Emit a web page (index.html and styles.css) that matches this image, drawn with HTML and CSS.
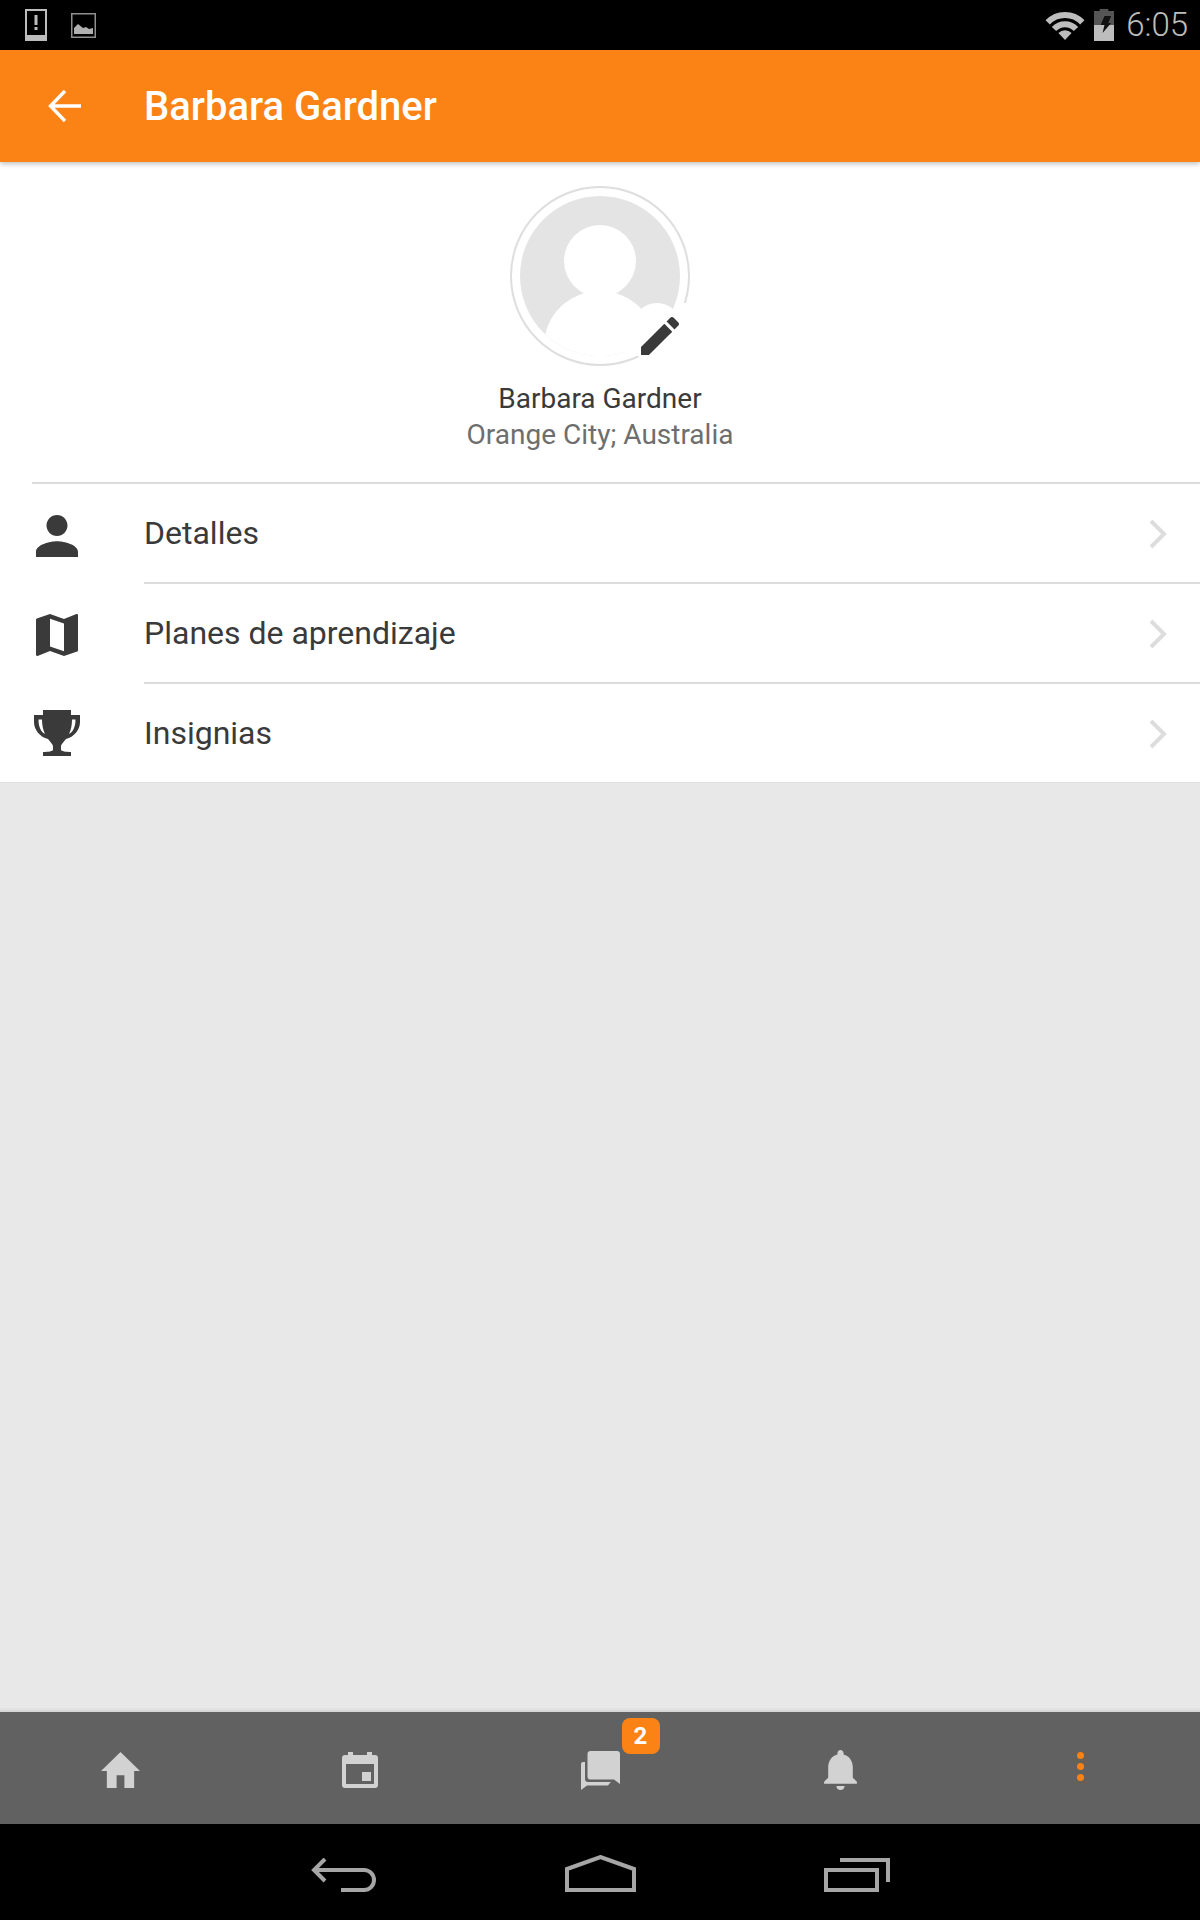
FILE: index.html
```html
<!DOCTYPE html>
<html lang="es">
<head>
  <meta charset="UTF-8" />
  <meta name="viewport" content="width=device-width, initial-scale=1.0" />
  <title>Barbara Gardner</title>
  <link rel="stylesheet" href="styles.css">
</head>
<body>
  <div class="pantalla">
    <div class="status-bar">
      <div class="status-izq">
        <svg width="22" height="32" viewBox="0 0 22 32">
          <path fill="#bdbdbd" fill-rule="evenodd" d="M0 0h22v32H0zM2 2v24h18V2z"/>
          <rect x="9.5" y="6" width="3" height="10" fill="#bdbdbd"/>
          <rect x="9.5" y="18" width="3" height="3" fill="#bdbdbd"/>
        </svg>
        <svg width="25" height="25" viewBox="0 0 25 25">
          <rect x="0.75" y="0.75" width="23.5" height="23.5" fill="none" stroke="#8f8f8f" stroke-width="1.5"/>
          <path fill="#b0b0b0" d="M3 21v-6l4-4 5 4 3-1 3 2 4-1v6z"/>
        </svg>
      </div>
      <div class="status-der">
        <svg class="wifi" width="40" height="29" viewBox="0 0 40 29">
          <path d="M2.700 11.300a24 24 0 0 1 34.600 0M9 18a15 15 0 0 1 22 0" fill="none" stroke="#bdbdbd" stroke-width="6"/>
          <path d="M13.400 22a9.500 9.500 0 0 1 13.200 0L20 29z" fill="#bdbdbd"/>
        </svg>
        <svg class="bateria" width="20" height="32" viewBox="0 0 21 32" preserveAspectRatio="none">
          <path fill="#555" d="M6 0h9v2h6v14H0V2h6z"/>
          <rect y="16" width="21" height="16" fill="#bdbdbd"/>
          <path fill="#111" d="M11 7h7l-3 7h3L9 24l2-8H7z"/>
        </svg>
        <span class="hora">6:05</span>
      </div>
    </div>

    <header class="toolbar">
      <svg class="btn-volver" width="34" height="34" viewBox="0 0 34 34">
        <path d="M33 17H4M17 2 2.500 17 17 32" fill="none" stroke="#fff" stroke-width="3.400"/>
      </svg>
      <h1>Barbara Gardner</h1>
    </header>

    <section class="perfil">
      <div class="avatar">
        <svg width="180" height="180" viewBox="0 0 180 180">
          <circle cx="90" cy="90" r="89" fill="none" stroke="#dedede" stroke-width="2"/>
          <circle cx="90" cy="90" r="80" fill="#e4e4e4"/>
          <clipPath id="recorte"><circle cx="90" cy="90" r="80"/></clipPath>
          <g clip-path="url(#recorte)" fill="#fff">
            <circle cx="90" cy="75" r="36"/>
            <ellipse cx="90" cy="160" rx="56" ry="55"/>
          </g>
          <circle cx="147" cy="141" r="24" fill="#fff"/>
          <circle cx="126" cy="152" r="18" fill="#fff"/>
          <path d="M174.800 116.800A89 89 0 0 1 128.500 170" fill="none" stroke="#fff" stroke-width="4"/>
        </svg>
        <svg class="lapiz" width="38" height="38" viewBox="3 3 18 18">
          <path fill="#3a3a3a" d="M3 17.250V21h3.750L17.810 9.940l-3.750-3.750L3 17.250zM20.710 7.040c.39-.39.39-1.020 0-1.410l-2.340-2.340c-.39-.39-1.020-.39-1.410 0l-1.830 1.830 3.750 3.750 1.830-1.830z"/>
        </svg>
      </div>
      <div class="perfil-nombre">Barbara Gardner</div>
      <div class="perfil-lugar">Orange City; Australia</div>
    </section>

    <ul class="menu">
      <li class="menu-item">
        <span class="menu-icono">
          <svg width="42" height="42" viewBox="4 4 16 16"><path d="M12 12c2.210 0 4-1.790 4-4s-1.790-4-4-4-4 1.790-4 4 1.790 4 4 4zm0 2c-2.670 0-8 1.340-8 4v2h16v-2c0-2.660-5.330-4-8-4z"/></svg>
        </span>
        <span class="menu-fila">
          <span>Detalles</span>
          <svg class="chevron" width="18" height="30" viewBox="0 0 18 30"><path d="M2 2l13 13L2 28"/></svg>
        </span>
      </li>
      <li class="menu-item">
        <span class="menu-icono">
          <svg width="42" height="42" viewBox="3 3 18 18"><path d="M20.500 3l-.16.030L15 5.100 9 3 3.360 4.900c-.21.070-.36.250-.36.480V20.500c0 .280.220.500.500.500l.16-.030L9 18.900l6 2.100 5.640-1.900c.210-.070.360-.250.360-.480V3.500c0-.280-.220-.500-.500-.500zM15 19l-6-2.110V5l6 2.110V19z"/></svg>
        </span>
        <span class="menu-fila">
          <span>Planes de aprendizaje</span>
          <svg class="chevron" width="18" height="30" viewBox="0 0 18 30"><path d="M2 2l13 13L2 28"/></svg>
        </span>
      </li>
      <li class="menu-item">
        <span class="menu-icono">
          <svg class="trofeo" width="46" height="46" viewBox="0 0 46 46"><path fill-rule="evenodd" d="M9 0H37V5H46V12C46 20 40 27 32 29C29 33 27 34 27 37V40C27 41 32 42 37 42V46H9V42C14 42 19 41 19 40V37C19 34 17 33 14 29C6 27 0 20 0 12V5H9ZM4.500 9.500H8C8 15 9 20 11 24C7 22 4.500 17 4.500 9.500ZM41.500 9.500H38C38 15 37 20 35 24C39 22 41.500 17 41.500 9.500Z"/></svg>
        </span>
        <span class="menu-fila">
          <span>Insignias</span>
          <svg class="chevron" width="18" height="30" viewBox="0 0 18 30"><path d="M2 2l13 13L2 28"/></svg>
        </span>
      </li>
    </ul>

    <main class="contenido"></main>

    <nav class="tabs">
      <a class="tab">
        <svg width="39" height="36" viewBox="2 3 20 17" preserveAspectRatio="none"><path d="M10 20v-6h4v6h5v-8h3L12 3 2 12h3v8z"/></svg>
      </a>
      <a class="tab">
        <svg width="36" height="36" viewBox="0 0 36 36"><path fill-rule="evenodd" d="M6 0h5v3h14V0h5v3h3a3 3 0 0 1 3 3v27a3 3 0 0 1-3 3H3a3 3 0 0 1-3-3V6a3 3 0 0 1 3-3h3zM4 12v20h28V12z"/><rect x="20" y="20" width="9" height="9"/></svg>
      </a>
      <a class="tab">
        <span class="tab-chat">
          <svg width="39" height="39" viewBox="0 0 39 39">
            <path d="M9.500 0H36a3 3 0 0 1 3 3V33l-6-4.500H9.500a3 3 0 0 1-3-3V3a3 3 0 0 1 3-3z"/>
            <path d="M0 13a2 2 0 0 1 2-2H4V28a3 3 0 0 0 3 3H30L28 33a2 2 0 0 1-2 1.500H6L0 39z"/>
          </svg>
          <span class="badge">2</span>
        </span>
      </a>
      <a class="tab">
        <svg width="33" height="40" viewBox="4 2.500 16 19.500"><path d="M12 22c1.100 0 2-.9 2-2h-4c0 1.100.89 2 2 2zm6-6v-5c0-3.070-1.640-5.640-4.500-6.320V4c0-.83-.67-1.500-1.500-1.500s-1.500.67-1.500 1.500v.68C7.630 5.360 6 7.920 6 11v5l-2 2v1h16v-1l-2-2z"/></svg>
      </a>
      <a class="tab">
        <span class="puntos"><i></i><i></i><i></i></span>
      </a>
    </nav>

    <div class="nav-sistema">
      <svg width="66" height="34" viewBox="0 0 66 34">
        <path d="M14 1 3 12l11 11M3 12h50a10 10 0 0 1 0 20H30" fill="none" stroke="#a6a6a6" stroke-width="4"/>
      </svg>
      <svg width="71" height="37" viewBox="0 0 71 37">
        <path d="M2 35V14L35.500 2 69 14v21z" fill="none" stroke="#a6a6a6" stroke-width="4"/>
      </svg>
      <svg width="66" height="34" viewBox="0 0 66 34">
        <rect x="2" y="12" width="51" height="20" fill="none" stroke="#a6a6a6" stroke-width="4"/>
        <path d="M16 2h48v22" fill="none" stroke="#a6a6a6" stroke-width="4"/>
      </svg>
    </div>
  </div>
</body>
</html>
```

FILE: styles.css
```css
* {
  box-sizing: border-box;
}
body {
  margin: 0;
  font-family: Roboto, "Liberation Sans", sans-serif;
  background: #e8e8e8;
}
.pantalla {
  width: 1200px;
  height: 1920px;
  display: flex;
  flex-direction: column;
}

.status-bar {
  height: 50px;
  background: #000;
  display: flex;
  justify-content: space-between;
  align-items: center;
  flex: none;
}
.status-izq {
  display: flex;
  align-items: center;
  gap: 24px;
  padding-left: 25px;
}
.status-der {
  display: flex;
  align-items: center;
  padding-right: 12px;
}
.wifi {
  margin-right: 9px;
}
.bateria {
  margin-right: 12px;
}
.hora {
  color: #bdbdbd;
  font-size: 33px;
  font-weight: 300;
  line-height: 50px;
}

.toolbar {
  height: 112px;
  flex: none;
  background: #fb8214;
  display: flex;
  align-items: center;
  padding-left: 48px;
  box-shadow: 0 2px 5px rgba(0, 0, 0, 0.25);
  position: relative;
}
.toolbar h1 {
  margin: 0 0 0 62px;
  color: #fff;
  font-size: 40px;
  font-weight: 500;
}

.perfil {
  background: #fff;
  height: 320px;
  flex: none;
  padding-top: 24px;
  text-align: center;
}
.avatar {
  width: 180px;
  height: 180px;
  margin: 0 auto;
  position: relative;
}
.avatar svg {
  display: block;
}
.lapiz {
  position: absolute;
  left: 131px;
  top: 131px;
}
.perfil-nombre {
  margin-top: 15px;
  font-size: 28px;
  line-height: 36px;
  color: #3a3a3a;
}
.perfil-lugar {
  font-size: 28px;
  line-height: 36px;
  color: #6e6e6e;
}

.menu {
  list-style: none;
  margin: 0;
  padding: 0;
  background: #fff;
  flex: none;
}
.menu::before {
  content: "";
  display: block;
  height: 2px;
  margin-left: 32px;
  background: #dcdcdc;
}
.menu-item {
  display: flex;
  height: 100px;
}
.menu-item:first-child {
  height: 98px;
}
.menu-item + .menu-item .menu-fila {
  border-top: 2px solid #dcdcdc;
}
.menu-icono {
  width: 144px;
  flex: none;
  display: flex;
  align-items: center;
  padding: 5px 0 0 36px;
}
.menu-icono svg {
  fill: #3a3a3a;
}
.menu-icono .trofeo {
  margin: -3px 0 0 -2px;
}
.menu-fila {
  flex: 1;
  display: flex;
  justify-content: space-between;
  align-items: center;
  padding-right: 33px;
  font-size: 32px;
  color: #3a3a3a;
}
.chevron {
  fill: none;
  stroke: #dddddd;
  stroke-width: 4;
  margin-top: 2px;
}

.contenido {
  flex: 1;
  border-top: 1px solid #e0e0e0;
  background: #e8e8e8;
}

.tabs {
  height: 114px;
  flex: none;
  background: #616161;
  border-top: 2px solid #d6d6d6;
  box-shadow: 0 -2px 0 #e2e2e2;
  display: flex;
}
.tab {
  flex: 1;
  display: flex;
  align-items: center;
  justify-content: center;
  padding-top: 4px;
}
.tab svg {
  fill: #d2d2d2;
  display: block;
}
.tab-chat {
  position: relative;
  display: block;
}
.badge {
  position: absolute;
  left: 41px;
  top: -33px;
  width: 38px;
  height: 36px;
  border-radius: 8px;
  background: #fb8214;
  color: #fff;
  font-size: 24px;
  font-weight: 700;
  line-height: 36px;
  text-align: center;
}
.puntos {
  display: flex;
  flex-direction: column;
  gap: 4px;
  margin-bottom: 8px;
}
.puntos i {
  width: 7px;
  height: 7px;
  border-radius: 50%;
  background: #fb8214;
}

.nav-sistema {
  height: 96px;
  flex: none;
  background: #000;
  display: flex;
  justify-content: center;
  align-items: flex-end;
  gap: 188px;
  padding-bottom: 28px;
}
```
